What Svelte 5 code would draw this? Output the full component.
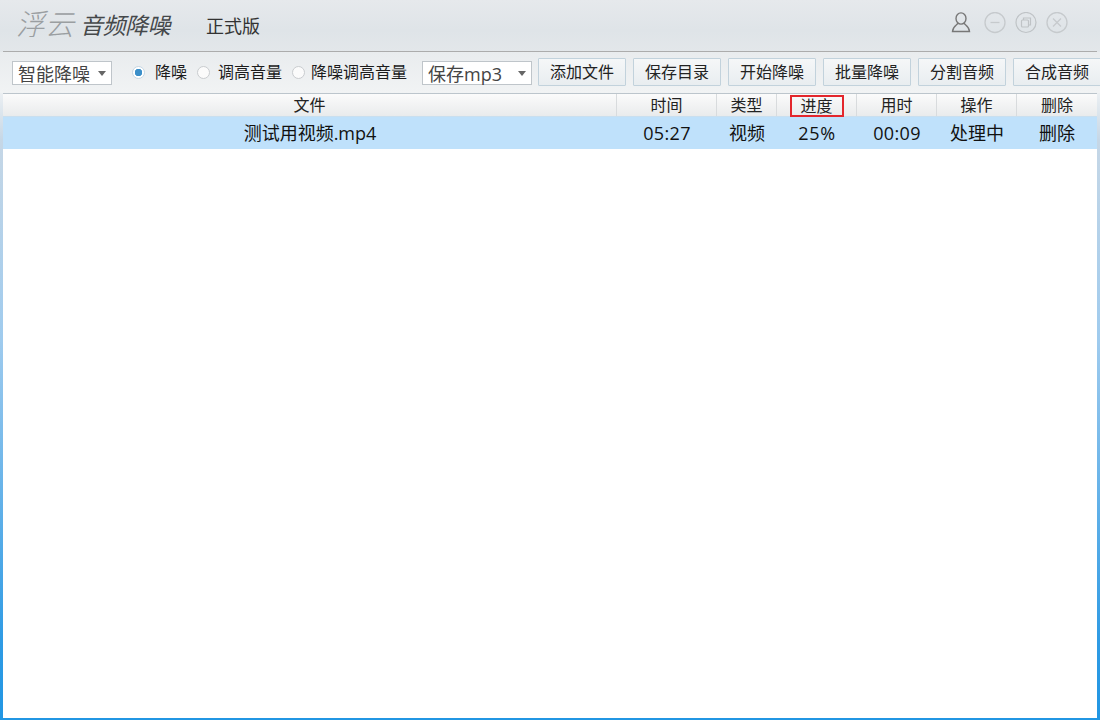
<script>
  const columns = [
    { label: '文件', value: '测试用视频.mp4', cls: 'file' },
    { label: '时间', value: '05:27', cls: 'time' },
    { label: '类型', value: '视频', cls: 'type' },
    { label: '进度', value: '25%', cls: 'prog', marked: true },
    { label: '用时', value: '00:09', cls: 'used' },
    { label: '操作', value: '处理中', cls: 'op' },
    { label: '删除', value: '删除', cls: 'del' }
  ];
  const buttons = ['添加文件', '保存目录', '开始降噪', '批量降噪', '分割音频', '合成音频'];
  const radios = [
    { label: '降噪', on: true, cls: 'r1' },
    { label: '调高音量', on: false, cls: 'r2' },
    { label: '降噪调高音量', on: false, cls: 'r3' }
  ];
</script>

<div class="window">
  <header class="titlebar">
    <div class="brand">
      <span class="logo">浮云</span>
      <span class="name">音频降噪</span>
      <span class="edition">正式版</span>
    </div>
    <div class="controls">
      <svg class="user" width="22" height="22" viewBox="0 0 22 22" fill="none" stroke="#777" stroke-width="1.4">
        <ellipse cx="11" cy="6.5" rx="5" ry="5.6" />
        <path d="M7.8 11 C7.8 13 3 13.5 2.5 19.5 H19.5 C19 13.5 14.2 13 14.2 11" />
      </svg>
      <svg width="22" height="22" viewBox="0 0.5 22 22" fill="none" stroke="#c6cacd" stroke-width="1.3">
        <circle cx="11" cy="11" r="10" />
        <path d="M6.5 11 H15.5" />
      </svg>
      <svg width="22" height="22" viewBox="0 0.5 22 22" fill="none" stroke="#bfc3c6" stroke-width="1.2">
        <circle cx="11" cy="11" r="10" />
        <rect x="6.5" y="8.5" width="7" height="7" rx="1" />
        <path d="M8.5 8.5 V6.5 H15.5 V13.5 H13.5" />
      </svg>
      <svg width="22" height="22" viewBox="0 0.5 22 22" fill="none" stroke="#c6cacd" stroke-width="1.3">
        <circle cx="11" cy="11" r="10" />
        <path d="M7 7 L15 15 M15 7 L7 15" />
      </svg>
    </div>
  </header>

  <div class="toolbar">
    <div class="select mode">智能降噪<i class="caret"></i></div>
    <div class="radios">
      {#each radios as r}
        <label class="radio {r.cls}"><span class="dot" class:on={r.on}></span>{r.label}</label>
      {/each}
    </div>
    <div class="select format">保存mp3<i class="caret"></i></div>
    <div class="buttons">
      {#each buttons as b}
        <button type="button">{b}</button>
      {/each}
    </div>
  </div>

  <div class="table">
    <div class="row head">
      {#each columns as c}
        <div class="cell {c.cls}"><span class:marked={c.marked}>{c.label}</span></div>
      {/each}
    </div>
    <div class="row item">
      {#each columns as c}
        <div class="cell {c.cls}">{c.value}</div>
      {/each}
    </div>
  </div>
</div>

<style>
  :global(body) {
    margin: 0;
    overflow: hidden;
  }
  .window {
    box-sizing: border-box;
    width: 1100px;
    height: 720px;
    display: flex;
    flex-direction: column;
    padding: 0 2px 2px;
    background: linear-gradient(180deg, #e3e7eb 0, #eef1f3 90px, #c6d7e6 140px, #9fcbee 340px, #2f9be4 640px, #2196e3 720px);
    font-family: "Open Sans", "Noto Sans CJK SC", sans-serif;
    color: #222;
  }
  .titlebar {
    height: 52px;
    margin: 0 -2px;
    padding: 0 32px 0 16px;
    flex: none;
    display: flex;
    justify-content: space-between;
    background: linear-gradient(180deg, #e6e9ec 0, #dfe4e8 30px, #e3e7ea 52px);
    position: relative;
  }
  .titlebar::after {
    content: '';
    position: absolute;
    left: 3px;
    right: 3px;
    bottom: 0;
    height: 1px;
    background: #acacac;
  }
  .brand {
    display: flex;
    align-items: center;
    height: 50px;
  }
  .logo {
    font-size: 29px;
    font-style: italic;
    font-weight: 300;
    color: #9a9ea1;
    line-height: 1;
    margin-top: -4px;
  }
  .name {
    font-size: 23px;
    font-style: italic;
    color: #45484a;
    margin-left: 6px;
    letter-spacing: -0.5px;
    line-height: 1;
  }
  .edition {
    font-size: 18px;
    color: #333;
    margin-left: 36px;
    line-height: 1;
    margin-top: 2px;
  }
  .controls {
    display: flex;
    gap: 9px;
    padding-top: 12px;
    height: 22px;
  }
  .user {
    margin-right: 3px;
  }
  .toolbar {
    height: 41px;
    box-sizing: border-box;
    padding: 0 0 1px 12px;
    flex: none;
    margin-left: -2px;
    margin-right: -2px;
    display: flex;
    align-items: center;
    background: linear-gradient(180deg, #e9ecee, #f1f3f4);
    overflow: hidden;
  }
  .select {
    box-sizing: border-box;
    height: 24px;
    margin-top: 1px;
    background: #fff;
    border: 1px solid #bfc5ca;
    display: flex;
    align-items: center;
    position: relative;
    font-size: 18px;
    color: #444;
    flex: none;
  }
  .mode {
    width: 100px;
    padding-left: 5px;
  }
  .format {
    width: 110px;
    padding-left: 5px;
    margin-left: 15px;
  }
  .caret {
    position: absolute;
    right: 5px;
    top: 9px;
    border: 4.5px solid transparent;
    border-top: 5px solid #666;
    border-bottom: 0;
  }
  .radios {
    display: flex;
    align-items: center;
    flex: none;
    margin-left: 20px;
    color: #1c1c1c;
  }
  .radio {
    display: flex;
    align-items: center;
    font-size: 16px;
    line-height: 20px;
    white-space: nowrap;
    flex: none;
  }
  .r2 { margin-left: 10px; }
  .r3 { margin-left: 10px; }
  .dot {
    box-sizing: border-box;
    width: 13px;
    height: 13px;
    border-radius: 50%;
    border: 1px solid #c9cccf;
    background: #fbfbfb;
    margin-right: 10px;
    flex: none;
  }
  .r2 .dot { margin-right: 8px; }
  .r3 .dot { margin-right: 6px; }
  .dot.on {
    background: radial-gradient(circle, #3b8fc9 0 3.5px, #fff 4px);
    border-color: #c6d7e4;
  }
  .buttons {
    display: flex;
    gap: 7px;
    margin-left: 6px;
    flex: none;
  }
  button {
    box-sizing: border-box;
    width: 88px;
    height: 28px;
    padding: 0;
    border: 1px solid #c2d2dc;
    border-radius: 1px;
    background: linear-gradient(180deg, #f5f7f8, #e8edf0);
    font: inherit;
    font-size: 16px;
    line-height: 26px;
    color: #222;
  }
  .table {
    flex: 1;
    background: #fff;
    border-top: 1px solid #bcc5cc;
    margin: 0 1px 0 1px;
  }
  .row {
    display: flex;
  }
  .cell {
    box-sizing: border-box;
    text-align: center;
    flex: none;
  }
  .file { width: 614px; }
  .time { width: 100px; }
  .type { width: 60px; }
  .prog, .used, .op, .del { width: 80px; }
  .head {
    height: 22px;
    background: linear-gradient(180deg, #fbfbfb, #e9ebec);
    font-size: 16px;
    line-height: 22px;
    color: #222;
    position: relative;
    z-index: 1;
  }
  .head .cell {
    border-right: 1px solid #d8dbdd;
  }
  .head .cell:last-child {
    border-right: 0;
  }
  .marked {
    display: inline-block;
    box-sizing: border-box;
    width: 54px;
    height: 22px;
    line-height: 19px;
    margin-top: 1px;
    border: 2px solid #e3262c;
    vertical-align: top;
  }
  .item {
    height: 33px;
    background: #bfe1fb;
    font-size: 18px;
    line-height: 33px;
    color: #111;
    border-top: 1px solid #c9dfef;
    box-sizing: border-box;
  }
  .item .time, .item .used { letter-spacing: 0.35px; }
  .item .prog { letter-spacing: 0.6px; }
</style>
